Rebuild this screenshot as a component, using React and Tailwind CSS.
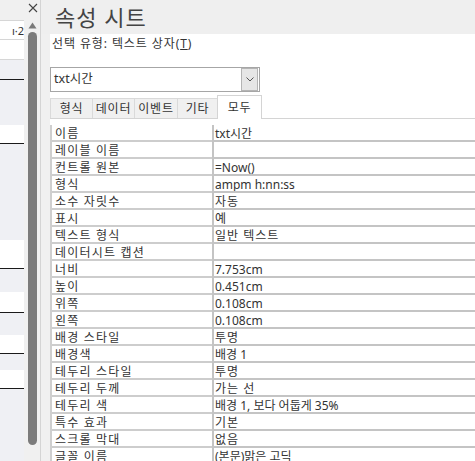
const rows = [
  ['이름', 'txt시간'],
  ['레이블 이름', ''],
  ['컨트롤 원본', '=Now()'],
  ['형식', 'ampm h:nn:ss'],
  ['소수 자릿수', '자동'],
  ['표시', '예'],
  ['텍스트 형식', '일반 텍스트'],
  ['데이터시트 캡션', ''],
  ['너비', '7.753cm'],
  ['높이', '0.451cm'],
  ['위쪽', '0.108cm'],
  ['왼쪽', '0.108cm'],
  ['배경 스타일', '투명'],
  ['배경색', '배경 1'],
  ['테두리 스타일', '투명'],
  ['테두리 두께', '가는 선'],
  ['테두리 색', '배경 1, 보다 어둡게 35%'],
  ['특수 효과', '기본'],
  ['스크롤 막대', '없음'],
  ['글꼴 이름', '(본문)맑은 고딕'],
];

const tabs = [
  { label: '형식', w: 'w-[42px]' },
  { label: '데이터', w: 'w-[42px]' },
  { label: '이벤트', w: 'w-[43px]' },
  { label: '기타', w: 'w-[40px]' },
];

// hangul-only values get the wider spacing of the labels
const isHangul = (s) => /^[\uac00-\ud7a3\s]+$/.test(s);

const LeftStrip = () => (
  <div className="w-[24px] flex flex-col shrink-0 overflow-hidden">
    <div className="h-[20px] bg-[#f0f0f0]" />
    <div className="h-[20px] bg-white border-t border-b border-[#d6d6d6] flex items-center justify-end text-[11px] leading-none text-[#333] whitespace-nowrap">ı·2</div>
    <div className="h-[20px] bg-white border-b border-[#d6d6d6]" />
    <div className="h-[20px] bg-[#eff0f4] border-b border-[#1a1a1a]" />
    <div className="h-[45px] bg-[#eff0f4]" />
    <div className="h-[19px] bg-white border-b border-[#1a1a1a]" />
    <div className="h-[96px] bg-[#eff0f4]" />
    <div className="h-[29px] bg-white border-b border-[#1a1a1a]" />
    <div className="h-[23px] bg-[#eff0f4]" />
    <div className="h-[21px] bg-white border-b border-[#1a1a1a]" />
    <div className="h-[22px] bg-[#eff0f4]" />
    <div className="h-[19px] bg-white border-b border-[#1a1a1a]" />
    <div className="h-[16px] bg-[#eff0f4]" />
    <div className="h-[19px] bg-white border-b border-[#1a1a1a]" />
    <div className="flex-1 bg-[#eff0f4]" />
  </div>
);

const ScrollColumn = () => (
  <div className="w-[16px] shrink-0 bg-[#f0f0f0] flex flex-col items-center">
    <svg width="10" height="10" viewBox="0 0 10 10" className="mt-[3px] ml-[2px]">
      <path d="M1 1 L9 9 M9 1 L1 9" stroke="#444" strokeWidth="1.1" fill="none" />
    </svg>
    <svg width="9" height="7" viewBox="0 0 9 7" className="mt-[9px] ml-[1px]">
      <path d="M4.5 0.5 L8.5 6.5 L0.5 6.5 Z" fill="#7a7a7a" />
    </svg>
    <div className="mt-[3px] ml-[1px] w-[9px] h-[413px] rounded-full bg-[#7b7b7b]" />
  </div>
);

export default function App() {
  return (
    <div className="w-[475px] h-[461px] overflow-hidden flex bg-white font-['Noto_Sans','Noto_Sans_CJK_KR',sans-serif] text-[#333]">
      <LeftStrip />
      <ScrollColumn />
      <div className="w-[1px] shrink-0 bg-[#d4d4d4]" />
      <div className="flex-1 min-w-0 flex flex-col bg-[#f0f0f0]">
        {/* header */}
        <div className="h-[34px] shrink-0 bg-[#efefef] pl-[14px] flex items-center">
          <span className="text-[22px] leading-none tracking-[1px] text-[#444]">속성 시트</span>
        </div>
        <div className="flex-1 flex min-h-0">
          <div className="w-[9px] shrink-0 bg-[#f0f0f0]" />
          <div className="flex-1 min-w-0 bg-white flex flex-col">
            <div className="h-[19px] pl-[2px] pt-[2px] text-[12px] leading-[15px] tracking-[0.9px] whitespace-nowrap">
              선택 유형: 텍스트 상자(<span className="underline">T</span>)
            </div>
            {/* selector */}
            <div className="mt-[16px] w-[210px] h-[27px] border border-[#a6a6a6] bg-white flex items-center">
              <span className="flex-1 pl-[3px] text-[12.5px] leading-none">txt시간</span>
              <div className="w-[17px] h-[23px] mr-[1px] bg-[#e6e6e6] border border-[#b4b4b4] flex items-center justify-center">
                <svg width="8" height="5" viewBox="0 0 8 5">
                  <path d="M0.5 0.5 L4 4 L7.5 0.5" stroke="#555" strokeWidth="1" fill="none" />
                </svg>
              </div>
            </div>
            {/* tabs */}
            <div className="mt-[3px] h-[24px] flex items-end border-b border-[#d4d4d4]">
              {tabs.map((t) => (
                <div
                  key={t.label}
                  className={`${t.w} h-[20px] bg-[#f0f0f0] border-t border-l border-[#dadada] flex items-center justify-center text-[12px] leading-none tracking-[0.8px]`}
                >
                  {t.label}
                </div>
              ))}
              <div className="w-[45px] h-[24px] -mb-px bg-white border-t border-l border-r border-[#d4d4d4] flex items-center justify-center text-[12px] leading-none tracking-[0.8px]">
                모두
              </div>
            </div>
            {/* property grid */}
            <div className="mt-[6px] border-l-2 border-[#cfcfcf]">
              {rows.map(([k, v]) => (
                <div key={k} className="flex h-[17px]">
                  <div className="w-[160px] shrink-0 border-b-2 border-[#cdcdcd] pl-[3px] pt-[1px] text-[12px] leading-[15px] tracking-[1.2px] whitespace-nowrap">
                    {k}
                  </div>
                  <div
                    className={`flex-1 border-l-2 border-b-2 border-[#c4c4c4] pl-[1px] pt-[1px] text-[12px] leading-[15px] whitespace-nowrap overflow-hidden ${isHangul(v) ? 'tracking-[1px]' : 'tracking-normal'}`}
                  >
                    {v}
                  </div>
                </div>
              ))}
            </div>
          </div>
        </div>
      </div>
    </div>
  );
}
